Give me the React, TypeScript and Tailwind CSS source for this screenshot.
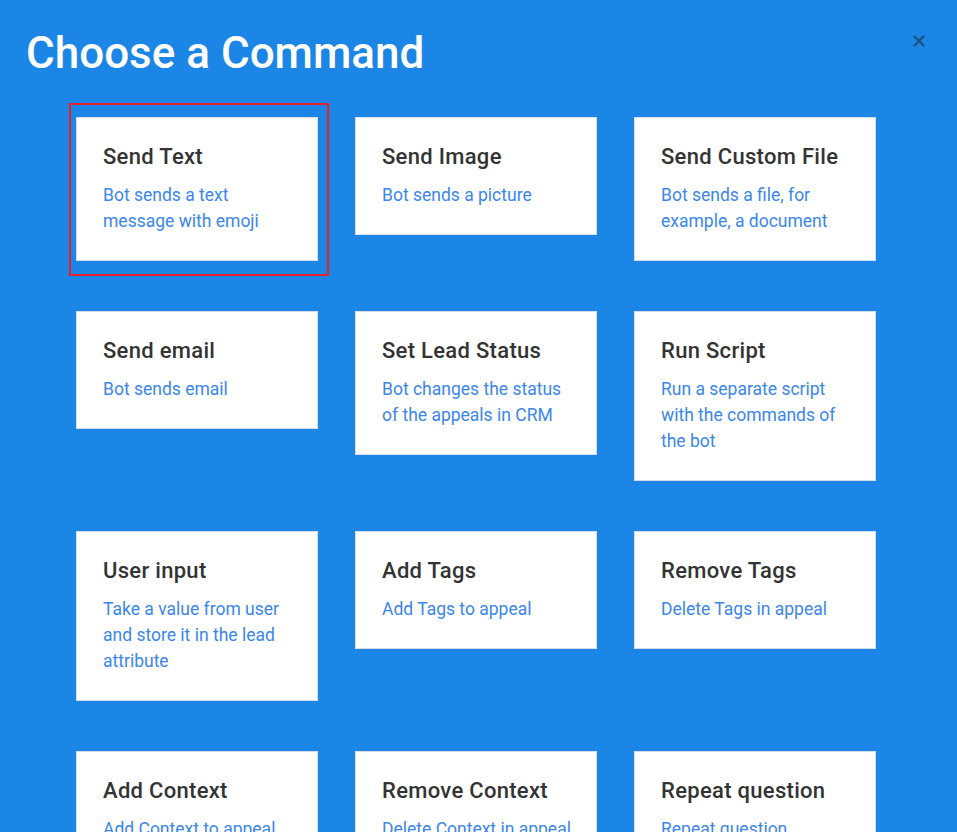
import { useState } from "react";

interface Command {
  id: string;
  title: string;
  description: string;
}

// All the commands the bot editor can add, in display order
const COMMANDS: Command[] = [
  { id: "send-text", title: "Send Text", description: "Bot sends a text message with emoji" },
  { id: "send-image", title: "Send Image", description: "Bot sends a picture" },
  { id: "send-file", title: "Send Custom File", description: "Bot sends a file, for example, a document" },
  { id: "send-email", title: "Send email", description: "Bot sends email" },
  { id: "lead-status", title: "Set Lead Status", description: "Bot changes the status of the appeals in CRM" },
  { id: "run-script", title: "Run Script", description: "Run a separate script with the commands of the bot" },
  { id: "user-input", title: "User input", description: "Take a value from user and store it in the lead attribute" },
  { id: "add-tags", title: "Add Tags", description: "Add Tags to appeal" },
  { id: "remove-tags", title: "Remove Tags", description: "Delete Tags in appeal" },
  { id: "add-context", title: "Add Context", description: "Add Context to appeal" },
  { id: "remove-context", title: "Remove Context", description: "Delete Context in appeal" },
  { id: "repeat-question", title: "Repeat question", description: "Repeat question" },
];

const App = () => {
  const [selected, setSelected] = useState<string>("send-text");

  return (
    <div
      className="relative min-h-screen bg-[#1c86e6] pb-16"
      style={{ fontFamily: "Roboto, 'Noto Sans', sans-serif" }}
    >
      <button
        type="button"
        aria-label="Close"
        className="absolute right-[31px] top-[34px] flex h-[14px] w-[14px] items-center justify-center"
      >
        <svg width="12" height="12" viewBox="0 0 12 12">
          <path
            d="M1.5 1.5 L10.5 10.5 M10.5 1.5 L1.5 10.5"
            stroke="#1d4f82"
            strokeWidth="2.4"
            strokeLinecap="round"
          />
        </svg>
      </button>

      <h1 className="pl-[26px] pt-[25px] text-[44px] font-medium leading-[56px] text-white">
        Choose a Command
      </h1>

      {/* Command grid */}
      <div className="ml-[76px] mt-[36px] grid w-[800px] grid-cols-3 items-start gap-x-[37px] gap-y-[50px]">
        {COMMANDS.map((cmd) => (
          <div
            key={cmd.id}
            onClick={() => setSelected(cmd.id)}
            className="relative cursor-pointer border border-[#d6dde6] bg-white pb-[26px] pl-[26px] pr-[22px] pt-[25px]"
          >
            {selected === cmd.id && (
              <div className="pointer-events-none absolute left-[-8px] top-[-15px] h-[173px] w-[260px] border-2 border-[#e8202a]" />
            )}
            <h3 className="text-[22px] font-medium leading-[28px] tracking-[0.3px] text-[#333333]">
              {cmd.title}
            </h3>
            <p className="mt-[11px] text-[17.5px] leading-[26px] text-[#3b86ea]">
              {cmd.description}
            </p>
          </div>
        ))}
      </div>
    </div>
  );
};

export default App;
